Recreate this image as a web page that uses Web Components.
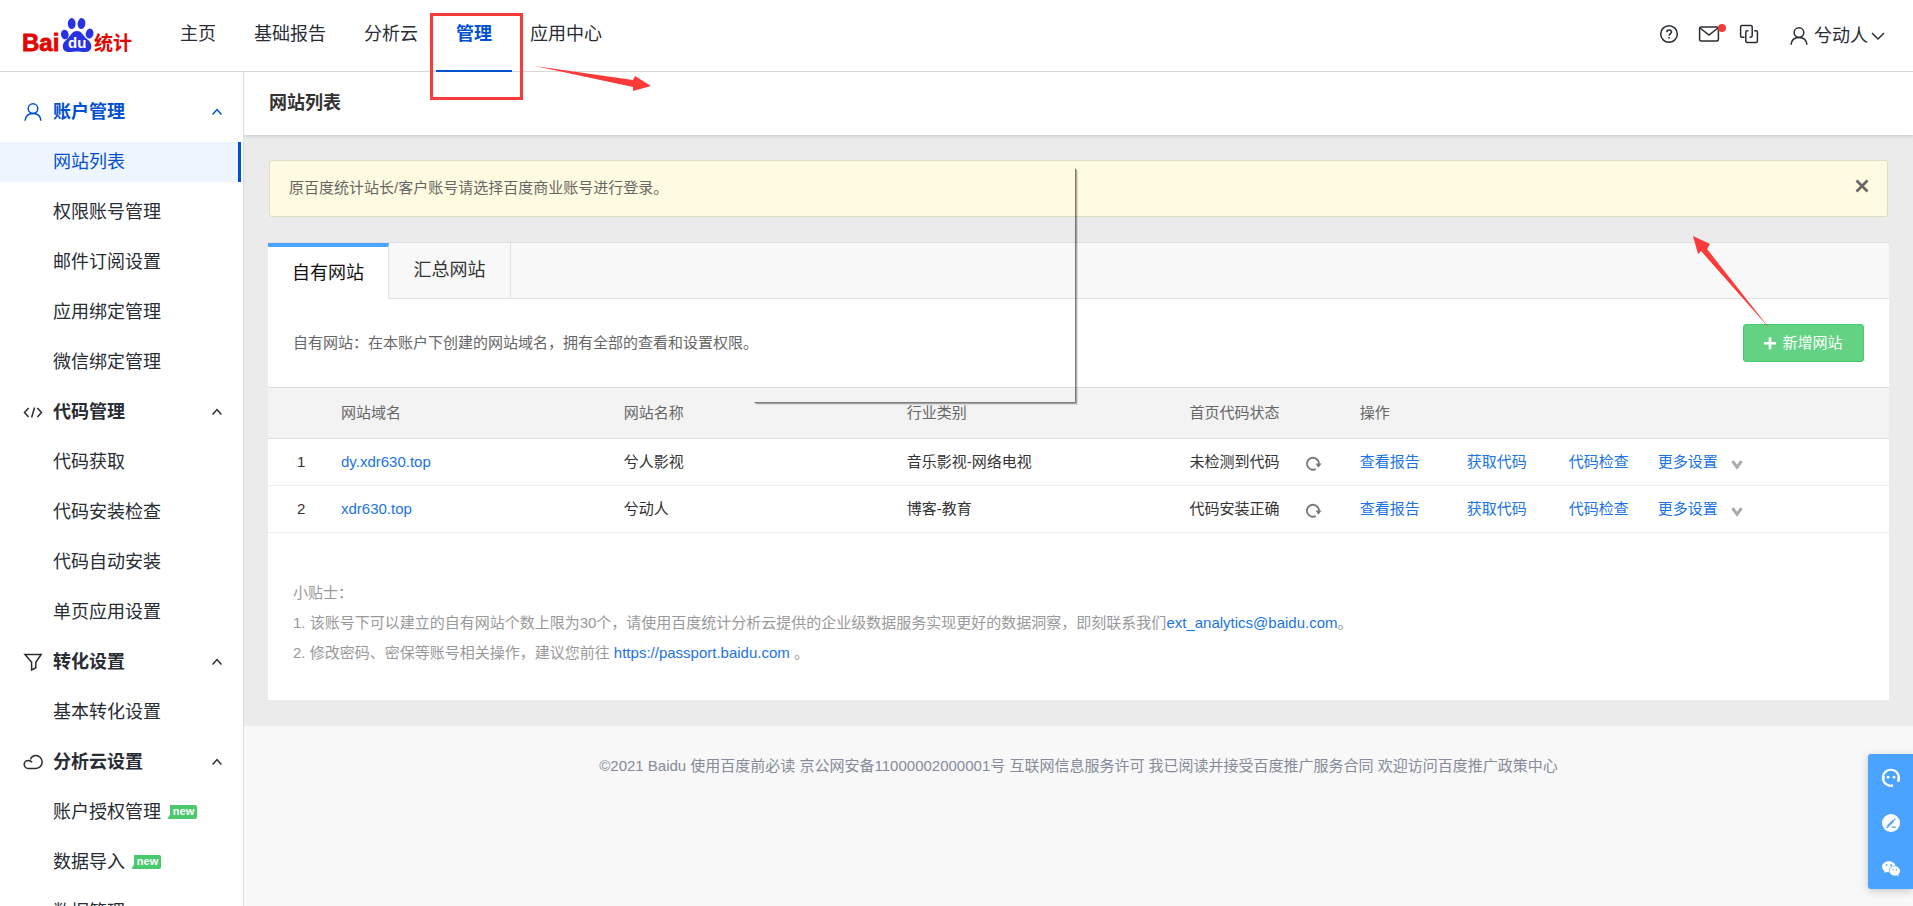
<!DOCTYPE html>
<html lang="zh-CN">
<head>
<meta charset="utf-8">
<title>百度统计 - 网站列表</title>
<style>
html, body { height: 100%; }
body {
  margin: 0;
  overflow: hidden;
  font-family: "Liberation Sans", "Noto Sans CJK SC", sans-serif;
  font-size: 15px;
  line-height: 20px;
  color: #333;
}
</style>
</head>
<body>
<tj-app></tj-app>
<script>
const define = (name, html, setup) => {
  const template = document.createElement('template');
  template.innerHTML = html;
  customElements.define(name, class extends HTMLElement {
    constructor() {
      super();
      this.attachShadow({ mode: 'open' }).append(template.content.cloneNode(true));
    }
    connectedCallback() { if (setup) setup(this, this.shadowRoot); }
  });
};

/* Line icons, each drawn on an 18 by 18 grid */
const ICONS = {
  user: '<circle cx="9" cy="5.6" r="4.8"/><path d="M1 17.8c.4-4.6 3.6-7.4 8-7.4s7.600 2.800 8 7.400"/>',
  code: '<path d="M4.600 5 .5 9.500l4.100 4.500M13.400 5l4.100 4.500-4.100 4.500M10.600 4.500 7.600 14.500"/>',
  funnel: '<path d="M1 1.500h16.200l-5.400 7.800v5.400l-4.200 2.200V9.300L1 1.500z"/>',
  cloud: '<path d="M5.200 15.500C2.400 15.500.2 13.800.2 11.400s1.900-4 4.200-4c1.500 0 2.900.8 3.600 2M6.400 6.600C7.400 4 9.400 2.600 11.800 2.600c3.600 0 6.300 2.800 6.300 6.400s-2.600 6.500-6.300 6.500H5.200"/>',
  help: '<circle cx="9" cy="9" r="8.300"/><path d="M6.700 7.200c.1-1.500 1-2.300 2.400-2.300s2.400.8 2.400 2.100c0 1.500-2.400 1.700-2.400 3.700M9.100 11.900v1.500"/>',
  mail: '<rect x="-.4" y="2" width="18.800" height="14" rx="1.500"/><path d="m0 3 9 7 9-7"/>',
  copy: '<path d="M4.500 12.200H1.800A1.200 1.200 0 0 1 .6 11V1.800A1.200 1.200 0 0 1 1.800.6H11a1.200 1.200 0 0 1 1.200 1.200v8.400a2 2 0 0 1-2 2H9.500M8.500 5.800H7.200A1.400 1.400 0 0 0 5.800 7.200v9a1.200 1.200 0 0 0 1.200 1.200h9.200a1.200 1.200 0 0 0 1.200-1.200V7a1.200 1.200 0 0 0-1.200-1.200h-2"/>',
  up: '<path d="m4.600 11.600 4.400-5 4.400 5"/>',
  down: '<path d="m3 6 6 6 6-6"/>',
  more: '<path d="M4.500 6.200 9 12.200l4.500-6" stroke-width="3" stroke="#aaa"/>',
  refresh: '<path d="M11.800 14A6 6 0 1 1 14.800 10" stroke="#777" stroke-width="1.800"/><path d="M11.600 8.600h6l-3.200 4.200z" fill="#777" stroke="none"/>',
  close: '<path d="m3.500 3.500 11 11m0-11-11 11" stroke="#666" stroke-width="2.600"/>',
  plus: '<path d="M9 2.500v13.600M2.200 9.300h13.600" stroke-width="3"/>',
  service: '<path d="M16 12.400A8 8 0 1 0 10.500 16.600" stroke-width="2.200"/><path d="M16.600 8.500v4M1.300 7v4M9 16.700h2" stroke-width="2.600"/><circle cx="6" cy="8.200" r="1.400" fill="currentColor" stroke="none"/><circle cx="12" cy="8.200" r="1.400" fill="currentColor" stroke="none"/>',
  edit: '<circle cx="9" cy="9" r="9" fill="currentColor" stroke="none"/><path d="m5.500 12.500 6.300-6.300" stroke="#4aa4ff" stroke-width="2"/><path d="m12.500 5.500.7-.7" stroke="#4aa4ff" stroke-width="2.200"/><path d="M4.300 13.300h2M9.500 13.200h4.500" stroke="#4aa4ff" stroke-width="1.200"/>',
  wechat: '<path d="M6.800 2.200C3 2.200.1 4.600.1 7.700c0 1.800 1 3.300 2.500 4.300L2 14.100l2.400-1.200c.9.200 1.700.3 2.600.3-.9-4 2.400-6.900 6.600-6.700-.7-2.500-3.400-4.300-6.800-4.300z" fill="currentColor" stroke="none"/><path d="M18 12c0-2.600-2.400-4.700-5.300-4.700S7.500 9.400 7.500 12s2.300 4.600 5.200 4.600c.7 0 1.400-.1 2-.3l2 1.100-.5-1.800c1.100-.9 1.800-2.100 1.800-3.600z" fill="currentColor" stroke="none"/><g fill="#4aa4ff" stroke="none"><circle cx="4.600" cy="6" r=".9"/><circle cx="9" cy="6" r=".9"/><circle cx="11" cy="10.700" r=".7"/><circle cx="14.400" cy="10.700" r=".7"/></g>'
};

define('tj-icon', `
<style>
:host { display: inline-block; flex: none; width: 18px; height: 18px; }
svg { display: block; overflow: visible; }
</style>
<svg width="100%" height="100%" viewBox="0 0 18 18" fill="none" stroke="currentColor" stroke-width="1.500" aria-hidden="true"></svg>
`, (el, root) => { root.querySelector('svg').innerHTML = ICONS[el.getAttribute('name')]; });

define('tj-logo', `
<style>
:host { display: block; flex: none; width: 112px; height: 38px; }
a, svg { display: block; }
text { font-family: "Liberation Sans", "Noto Sans CJK SC", sans-serif; font-weight: 700; }
</style>
<a href="#" aria-label="百度统计">
<svg width="112" height="38" viewBox="0 0 112 38">
  <text x="0" y="34" font-size="24" fill="#e10602" stroke="#e10602" stroke-width=".8">Bai</text>
  <g fill="#2932e1">
    <ellipse cx="42.800" cy="17.500" rx="3.800" ry="4.800" transform="rotate(-12 42.800 17.500)"/>
    <ellipse cx="49.700" cy="6.600" rx="3.900" ry="5.500"/>
    <ellipse cx="59.500" cy="6.600" rx="3.900" ry="5.500" transform="rotate(6 59.500 6.600)"/>
    <ellipse cx="67.600" cy="16.600" rx="3.900" ry="5" transform="rotate(10 67.600 16.600)"/>
    <path d="M54.800 14c4.700 0 5.800 3.600 8.500 6.400 3 2.700 6 4.600 6 9 0 4-3 5.600-6.500 5.600-3 0-5-.6-7.800-.6s-4.800.6-7.900.6c-3.800 0-6.300-2-6.300-5.600 0-4.300 3.200-6.300 5.800-9 2.700-2.800 3.800-6.400 8.200-6.400z"/>
  </g>
  <text x="46" y="31" font-size="15" fill="#fff">du</text>
  <text x="72" y="33" font-size="19" fill="#e10602">统计</text>
</svg>
</a>
`);

define('nav-link', `
<style>
:host { display: block; }
a { position: relative; display: block; height: 72px; line-height: 68px; color: #282c33; text-decoration: none; font-size: 18px; }
:host([active]) a { color: #0050d0; font-weight: 700; }
:host([active]) a::after { content: ""; position: absolute; inset: auto -20px 0; height: 2px; background: #0050d0; box-shadow: 0 2px 3px rgba(0,80,208,.3); }
</style>
<a href="#"><slot></slot></a>
`);

define('tj-header', `
<style>
:host { display: flex; box-sizing: border-box; height: 72px; padding: 0 26px 0 22px; border-bottom: 1px solid #d8d8d8; background: #fff; color: #282c33; }
tj-logo { margin: 17px 46px 0 0; }
nav { display: flex; gap: 38px; }
.tools { display: flex; align-items: center; gap: 22px; height: 68px; margin-left: auto; }
button { display: flex; align-items: center; position: relative; padding: 0; border: 0; background: none; color: inherit; font: inherit; }
.dot::after { content: ""; position: absolute; right: -8px; top: -1px; width: 8px; height: 8px; border-radius: 50%; background: #f23c3c; }
.account { gap: 6px; height: 24px; margin: 3px 0 0 10px; font-size: 18px; line-height: 24px; }
.account tj-icon:last-child { width: 18px; height: 18px; margin-left: -5px; }
</style>
<tj-logo></tj-logo>
<nav>
  <nav-link>主页</nav-link><nav-link>基础报告</nav-link><nav-link>分析云</nav-link><nav-link active>管理</nav-link><nav-link>应用中心</nav-link>
</nav>
<div class="tools">
  <button aria-label="帮助"><tj-icon name="help"></tj-icon></button>
  <button class="dot" aria-label="消息"><tj-icon name="mail"></tj-icon></button>
  <button aria-label="切换"><tj-icon name="copy"></tj-icon></button>
  <button class="account"><tj-icon name="user"></tj-icon>兮动人<tj-icon name="down"></tj-icon></button>
</div>
`);

define('side-group', `
<style>
:host { display: grid; gap: 10px; }
button { display: flex; align-items: center; height: 40px; padding: 0 17px 0 24px; border: 0; background: none; color: #282c33; font: inherit; font-size: 18px; font-weight: 700; text-align: left; }
:host([active]) button { color: #0050d0; }
tj-icon { margin-right: 11px; }
tj-icon:last-child { margin: 0 0 0 auto; }
</style>
<button aria-expanded="true"><tj-icon></tj-icon><span></span><tj-icon name="up"></tj-icon></button>
<slot></slot>
`, (el, root) => {
  const icon = document.createElement('tj-icon');
  icon.setAttribute('name', el.getAttribute('icon'));
  root.querySelector('tj-icon').replaceWith(icon);
  root.querySelector('span').textContent = el.getAttribute('label');
});

define('side-item', `
<style>
:host { display: block; }
a { display: flex; align-items: center; box-sizing: border-box; height: 40px; margin-right: 2px; padding-left: 53px; border-right: 3px solid transparent; color: #282c33; font-size: 18px; text-decoration: none; }
:host([active]) a { background: #eff5ff; border-color: #0050d0; color: #0050d0; }
</style>
<a href="#"><slot></slot></a>
`);

define('new-tag', `
<style>
:host { box-sizing: border-box; display: block; width: 30px; height: 14px; margin-left: 6px; padding-left: 3px; background: #4bc96c; border-radius: 2px; color: #fff; font: 700 11px/12px "Liberation Sans", sans-serif; text-align: center; clip-path: polygon(3px 0, 100% 0, 100% 100%, 0 100%, 3px 70%); }
</style>new
`);

define('tj-sidebar', `
<style>
:host { display: grid; align-content: start; gap: 10px; box-sizing: border-box; width: 244px; flex: none; padding-top: 20px; overflow: hidden; border-right: 1px solid #ddd; background: #fff; }
</style>
<side-group active icon="user" label="账户管理">
  <side-item active>网站列表</side-item><side-item>权限账号管理</side-item><side-item>邮件订阅设置</side-item><side-item>应用绑定管理</side-item><side-item>微信绑定管理</side-item>
</side-group>
<side-group icon="code" label="代码管理">
  <side-item>代码获取</side-item><side-item>代码安装检查</side-item><side-item>代码自动安装</side-item><side-item>单页应用设置</side-item>
</side-group>
<side-group icon="funnel" label="转化设置"><side-item>基本转化设置</side-item></side-group>
<side-group icon="cloud" label="分析云设置">
  <side-item>账户授权管理<new-tag></new-tag></side-item><side-item>数据导入<new-tag></new-tag></side-item><side-item>数据管理</side-item>
</side-group>
`);

define('tj-notice', `
<style>
:host { display: flex; justify-content: space-between; box-sizing: border-box; height: 57px; margin: 0 1px; padding: 0 16px 0 19px; border: 1px solid #e0dcc0; border-radius: 3px; background: #fffbe0; color: #666; line-height: 54px; }
button { align-self: start; margin-top: 16px; padding: 0; border: 0; background: none; }
tj-icon { display: block; }
</style>
<span><slot></slot></span>
<button aria-label="关闭"><tj-icon name="close"></tj-icon></button>
`);

define('site-tabs', `
<style>
:host { display: flex; box-sizing: border-box; height: 57px; border-top: 1px solid #e0e0e0; border-bottom: 1px solid #e0e0e0; background: #f8f8f8; }
button { box-sizing: border-box; width: 122px; padding: 0 0 2px; border: 0; border-right: 1px solid #e0e0e0; background: none; color: #333; font: inherit; font-size: 18px; line-height: 52px; }
button[aria-selected=true] { width: 121px; height: 56px; padding: 0; border-top: 4px solid #4aa4ff; background: #fff; color: #111; }
</style>
<button role="tab" aria-selected="true">自有网站</button>
<button role="tab" aria-selected="false">汇总网站</button>
`);

define('site-table', `
<style>
:host { display: block; }
table { width: 100%; table-layout: fixed; border-collapse: separate; border-spacing: 0; }
th, td { box-sizing: border-box; padding: 0; text-align: left; font-weight: 400; white-space: nowrap; }
th { height: 52px; border-top: 1px solid #ddd; border-bottom: 1px solid #ddd; background: #f3f3f3; color: #666; }
td { height: 47px; border-bottom: 1px solid #eee; }
td:first-child { padding-left: 29px; }
.n { width: 73px; } .c { width: 17.45%; } .s { width: 10.5%; }
a { color: #1b74e4; text-decoration: none; }
.status { display: flex; align-items: center; gap: 24px; }
.ops { display: grid; grid-template-columns: 107px 102px 89px auto; }
.more { display: flex; align-items: center; gap: 10px; height: 20px; }
.more tj-icon { margin-top: 4px; }
button { display: block; margin-top: 3px; padding: 0; border: 0; background: none; }
button tj-icon { display: block; }
</style>
<table>
  <colgroup><col class="n"><col class="c"><col class="c"><col class="c"><col class="s"><col></colgroup>
  <thead><tr><th></th><th>网站域名</th><th>网站名称</th><th>行业类别</th><th>首页代码状态</th><th>操作</th></tr></thead>
  <tbody></tbody>
</table>
`, (el, root) => {
  root.querySelector('tbody').innerHTML = [
    ['dy.xdr630.top', '兮人影视', '音乐影视-网络电视', '未检测到代码'],
    ['xdr630.top', '兮动人', '博客-教育', '代码安装正确']
  ].map(([host, name, kind, status], i) => `<tr><td>${i + 1}</td><td><a href="#">${host}</a></td><td>${name}</td><td>${kind}</td>
    <td><div class="status">${status}<button aria-label="刷新"><tj-icon name="refresh"></tj-icon></button></div></td>
    <td><div class="ops"><a href="#">查看报告</a><a href="#">获取代码</a><a href="#">代码检查</a><a class="more" href="#">更多设置<tj-icon name="more"></tj-icon></a></div></td></tr>`).join('');
});

define('site-panel', `
<style>
:host { display: block; background: #fff; }
.intro { display: flex; align-items: center; justify-content: space-between; height: 88px; padding: 0 25px; color: #666; }
.intro button { display: flex; align-items: center; justify-content: center; gap: 4px; box-sizing: border-box; width: 121px; height: 38px; padding: 0 2px 0 0; border: 1px solid #4ac96c; border-radius: 3px; background: #63d283; color: #fff; font: inherit; }
.plus { width: 16px; height: 16px; }
.tips { padding: 45px 25px 32px; color: #999; line-height: 30px; }
p { margin: 0; }
a { color: #1b74e4; text-decoration: none; }
</style>
<site-tabs></site-tabs>
<div class="intro"><span>自有网站：在本账户下创建的网站域名，拥有全部的查看和设置权限。</span><button><tj-icon class="plus" name="plus"></tj-icon>新增网站</button></div>
<site-table></site-table>
<div class="tips">
  <p>小贴士：</p>
  <p>1. 该账号下可以建立的自有网站个数上限为30个，请使用百度统计分析云提供的企业级数据服务实现更好的数据洞察，即刻联系我们<a href="#">ext_analytics@baidu.com</a>。</p>
  <p>2. 修改密码、密保等账号相关操作，建议您前往 <a href="#">https://passport.baidu.com</a> 。</p>
</div>
`);

define('tj-footer', `
<style>
:host { display: block; padding: 25px 0; color: #858b98; line-height: 30px; text-align: center; }
</style>
©2021 Baidu 使用百度前必读 京公网安备11000002000001号 互联网信息服务许可 我已阅读并接受百度推广服务合同 欢迎访问百度推广政策中心
`);

define('float-tools', `
<style>
:host { position: fixed; right: 0; bottom: 17px; width: 45px; border-radius: 3px 0 0 3px; background: #4aa4ff; box-shadow: 0 2px 8px rgba(0,0,0,.2); }
button { display: grid; place-items: center; box-sizing: border-box; width: 45px; height: 45px; padding: 3px 0 0; border: 0; background: none; color: #fff; }
</style>
<button aria-label="在线客服"><tj-icon name="service"></tj-icon></button>
<button aria-label="意见反馈"><tj-icon name="edit"></tj-icon></button>
<button aria-label="微信"><tj-icon name="wechat"></tj-icon></button>
`);

/* Hand-drawn marks laid over the page */
define('tour-marks', `
<style>
:host { position: absolute; inset: 0; pointer-events: none; overflow: hidden; }
svg { display: block; overflow: visible; }
</style>
<svg width="1" height="1" aria-hidden="true">
  <defs>
    <linearGradient id="v" x1="0" x2="1" y1="0" y2="0"><stop offset="0" stop-color="#000" stop-opacity=".55"/><stop offset=".3" stop-color="#000" stop-opacity=".45"/><stop offset="1" stop-color="#000" stop-opacity="0"/></linearGradient>
    <linearGradient id="h" x1="0" x2="0" y1="0" y2="1"><stop offset="0" stop-color="#000" stop-opacity=".55"/><stop offset=".3" stop-color="#000" stop-opacity=".45"/><stop offset="1" stop-color="#000" stop-opacity="0"/></linearGradient>
  </defs>
  <path d="M1075 168l3 3V405l-3-3z" fill="url(#v)"/>
  <path d="M754 402H1075l3 3H757z" fill="url(#h)"/>
  <g fill="#fc3a3a">
    <path d="M535 66l98 14 2-4 16 10-18 5v-4z"/>
    <path d="M1693 236l17 8-3 5 63 80-69-78-3 3z"/>
  </g>
  <rect x="431.500" y="14.500" width="90" height="84" fill="none" stroke="#fc3a3a" stroke-width="3"/>
</svg>
`);

define('tj-app', `
<style>
:host { display: flex; flex-direction: column; position: relative; height: 100vh; }
.body { display: flex; flex: 1; min-height: 0; }
main { flex: 1; min-width: 0; overflow: hidden; background: #f8f8f8; }
h1 { position: relative; margin: 0; padding: 0 25px; background: #fff; box-shadow: 0 1px 4px rgba(0,0,0,.16); color: #333; font-size: 18px; line-height: 63px; }
.content { display: grid; gap: 25px; padding: 25px 24px 26px; background: #ebebeb; }
</style>
<tj-header></tj-header>
<div class="body">
  <tj-sidebar></tj-sidebar>
  <main>
    <h1>网站列表</h1>
    <div class="content">
      <tj-notice>原百度统计站长/客户账号请选择百度商业账号进行登录。</tj-notice>
      <site-panel></site-panel>
    </div>
    <tj-footer></tj-footer>
  </main>
</div>
<float-tools></float-tools>
<tour-marks></tour-marks>
`);
</script>
</body>
</html>
